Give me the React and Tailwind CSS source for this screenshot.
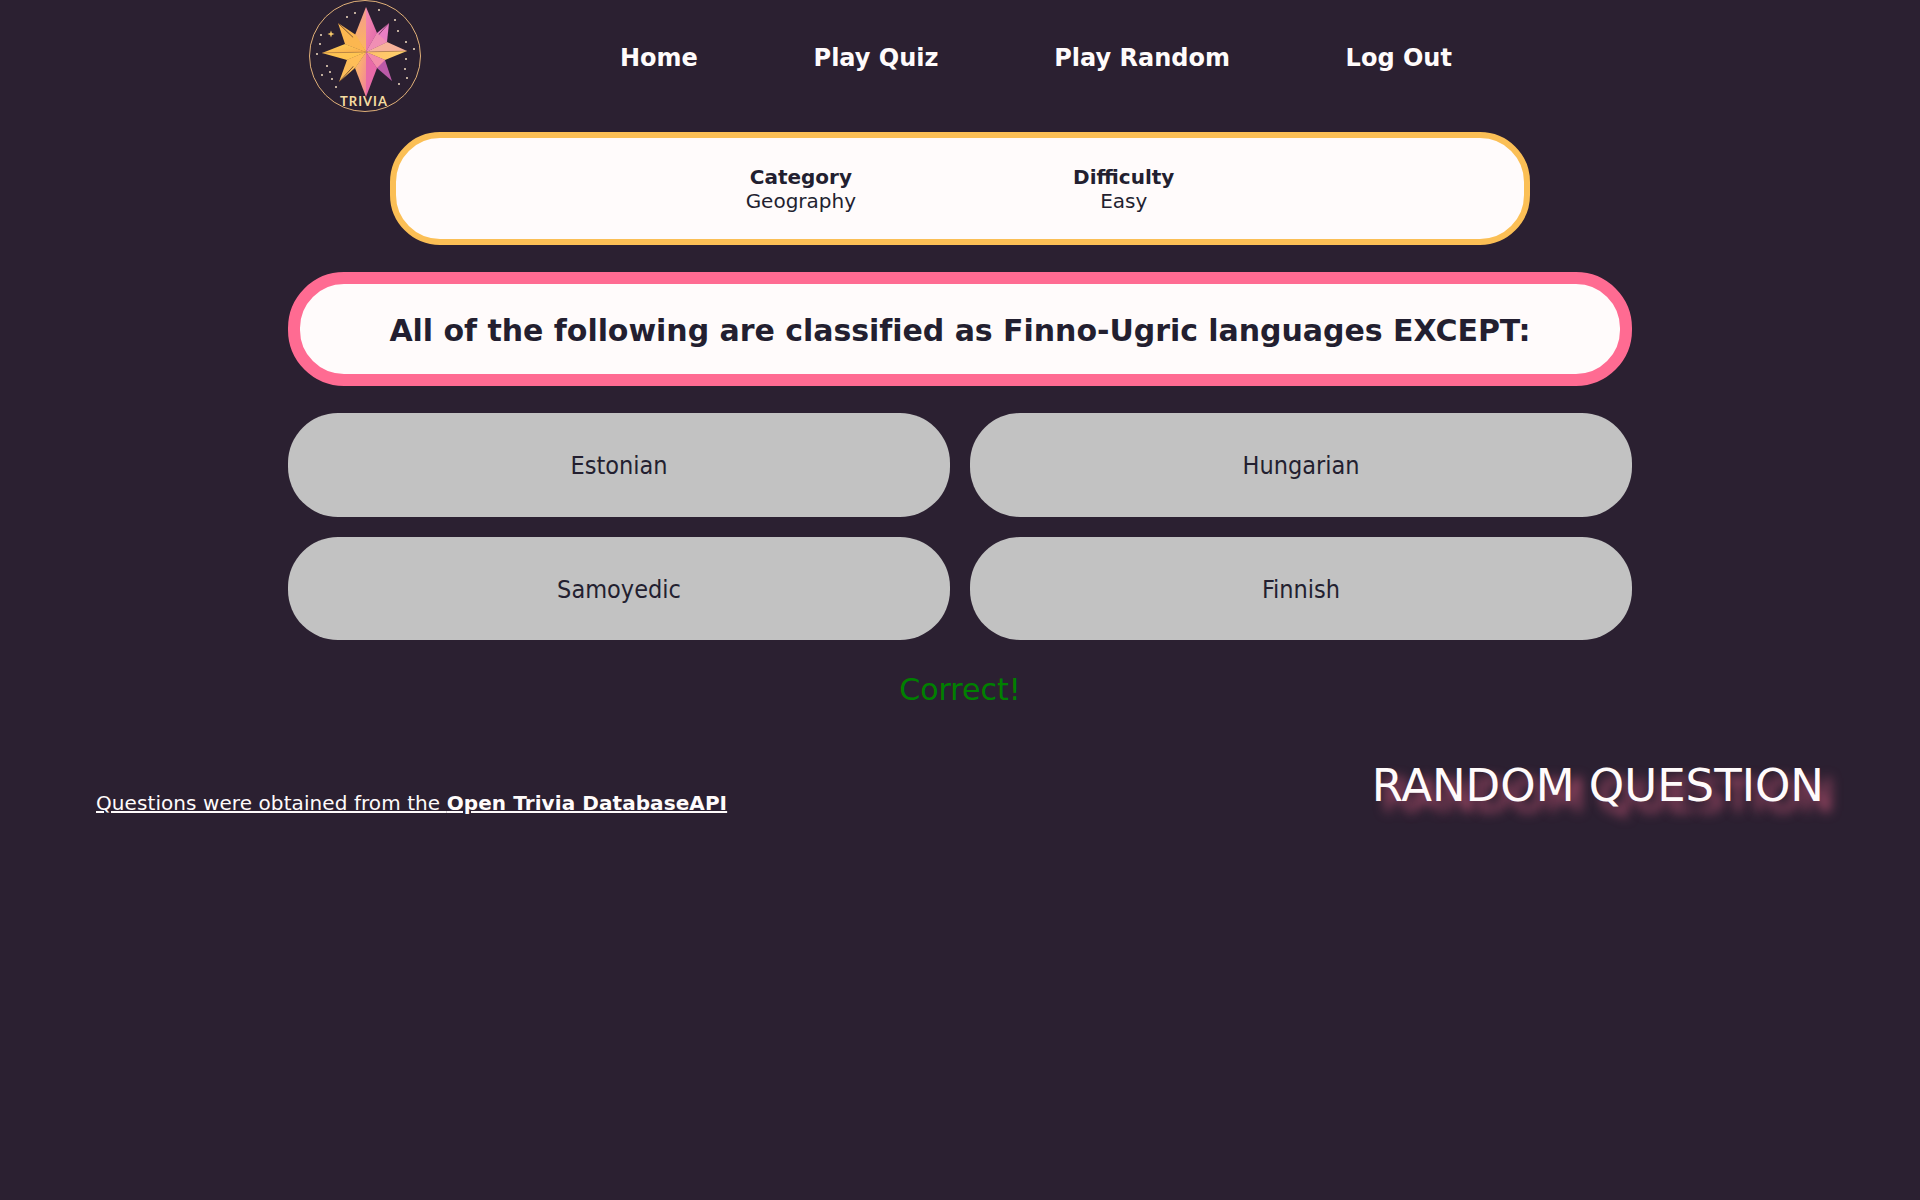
const sans = "font-['DejaVu_Sans',Verdana,sans-serif]";

function Logo() {
  const dots = [
    [57, 17], [65, 13], [89, 10], [31, 35], [108, 31], [116, 42], [30, 44], [116, 59], [124, 49],
    [27, 54], [37, 66], [115, 69], [32, 75], [42, 79], [117, 78], [46, 87], [109, 84], [40, 72], [105, 20],
  ];
  return (
    <svg viewBox="0 0 150 120" className="w-[150px] h-[120px] shrink-0">
      <defs>
        <linearGradient id="yel" x1="0" y1="0" x2="1" y2="1">
          <stop offset="0" stopColor="#ffd457" />
          <stop offset="1" stopColor="#f9aa4d" />
        </linearGradient>
        <linearGradient id="pnk" x1="0" y1="0" x2="1" y2="1">
          <stop offset="0" stopColor="#f58ab0" />
          <stop offset="1" stopColor="#e066ac" />
        </linearGradient>
        <linearGradient id="top" x1="0" y1="0" x2="0" y2="1">
          <stop offset="0" stopColor="#f59a90" />
          <stop offset="1" stopColor="#fbb85c" />
        </linearGradient>
        <linearGradient id="low" x1="0" y1="0" x2="1" y2="1">
          <stop offset="0" stopColor="#ffc75c" />
          <stop offset="1" stopColor="#f17f9c" />
        </linearGradient>
        <linearGradient id="arm" x1="0" y1="0" x2="1" y2="0">
          <stop offset="0" stopColor="#ffbe6a" />
          <stop offset="1" stopColor="#ffd46a" />
        </linearGradient>
      </defs>
      <circle cx="75" cy="56" r="55.5" fill="none" stroke="#e0b078" strokeWidth="1" />
      {dots.map(([x, y], i) => (
        <circle key={i} cx={x} cy={y} r="1" fill="#f3dcc0" />
      ))}
      <path d="M41 30.500l0.900 2.600 2.600 0.900-2.600 0.900-0.900 2.600-0.900-2.600-2.600-0.900 2.600-0.900z" fill="#f5c869" />
      {/* diagonal points */}
      <path d="M48 23L66 35 76 52 55 44z" fill="#fcb750" />
      <path d="M99 23L87 33 76 52 97 42z" fill="#e97fc4" />
      <path d="M49 82L65 68 76 52 57 60z" fill="#fbbc58" />
      <path d="M102 81L87 68 76 52 95 60z" fill="#bb5aa8" />
      <path d="M48 23L70 44" stroke="#5a3a2c" strokeWidth="0.8" />
      <path d="M99 23L84 40" stroke="#6e3458" strokeWidth="0.8" />
      <path d="M49 82L71 58" stroke="#5a3a2c" strokeWidth="0.8" />
      {/* four main points */}
      <path d="M76 7L65 35 76 52z" fill="url(#top)" />
      <path d="M76 7L87 33 76 52z" fill="url(#pnk)" />
      <path d="M32 53L55 44 76 52z" fill="url(#yel)" />
      <path d="M32 53L57 60 76 52z" fill="#ffc552" />
      <path d="M117 51L97 42 76 52z" fill="#f7b29a" />
      <path d="M117 51L95 60 76 52z" fill="url(#arm)" />
      <path d="M76 97L65 68 76 52z" fill="url(#low)" />
      <path d="M76 97L87 68 76 52z" fill="#e86aa8" />
      <path d="M55 44L76 52 66 35z" fill="#fcb750" />
      <path d="M97 42L76 52 87 33z" fill="#f08fb4" />
      <path d="M57 60L76 52 65 68z" fill="#ffbe58" />
      <path d="M95 60L76 52 87 68z" fill="#f48ca9" />
      <path d="M32 53L117 51" stroke="#a8703f" strokeWidth="0.4" />
      <text x="74" y="106" textAnchor="middle" fill="#f5dca0" fontSize="13" fontWeight="700" letterSpacing="1" fontFamily="Lato, sans-serif">TRIVIA</text>
    </svg>
  );
}

function Answer({ children }) {
  return (
    <button className="h-[103.5px] pt-[2px] rounded-[50px] bg-[#c2c2c2] text-[#231f30] text-[25px] font-['DejaVu_Sans_Condensed','DejaVu_Sans',sans-serif]">
      {children}
    </button>
  );
}

export default function App() {
  return (
    <div className={`min-h-[1200px] bg-[#2b2031] ${sans}`}>
      <nav className="flex items-start h-[132px] pl-[290px]">
        <Logo />
        <div className="flex ml-[180px] mt-[40px] gap-[115.7px] text-[24px] font-bold text-[#fffbfb]">
          <a>Home</a>
          <a>Play Quiz</a>
          <a>Play Random</a>
          <a>Log Out</a>
        </div>
      </nav>

      <div className="mx-auto w-[1140px] h-[113px] rounded-[50px] border-[6px] border-[#fbbf55] bg-[#fffbfb] flex items-center justify-center gap-[217px] text-[#231f30] text-[20px] leading-[24px] text-center">
        <div>
          <div className="font-bold">Category</div>
          <div>Geography</div>
        </div>
        <div>
          <div className="font-bold">Difficulty</div>
          <div>Easy</div>
        </div>
      </div>

      <h1 className="mx-auto mt-[27px] w-[1344px] h-[114px] pt-[2px] rounded-[56px] border-[12px] border-[#ff6b92] bg-[#fffbfb] flex items-center justify-center text-[#231f30] text-[30px] font-bold tracking-[-0.04px]">
        All of the following are classified as Finno-Ugric languages EXCEPT:
      </h1>

      <div className="mx-auto mt-[27px] w-[1344px] grid grid-cols-2 gap-[20px]">
        <Answer>Estonian</Answer>
        <Answer>Hungarian</Answer>
        <Answer>Samoyedic</Answer>
        <Answer>Finnish</Answer>
      </div>

      <p className="mt-[31px] text-center text-[30px] leading-[38px] text-[#008000]">Correct!</p>

      <div className="flex items-center justify-between mt-[43px] px-[96px]">
        <a className="text-[20px] tracking-[0.08px] text-[#fffbfb] underline mt-[34px]">
          Questions were obtained from the <b>Open Trivia DatabaseAPI</b>
        </a>
        <div className="text-[45px] text-[#fffbfb] [text-shadow:10px_10px_12px_#ff6b92b3]">RANDOM QUESTION</div>
      </div>
    </div>
  );
}
